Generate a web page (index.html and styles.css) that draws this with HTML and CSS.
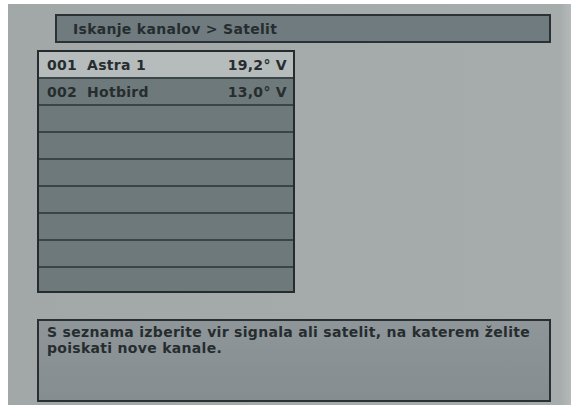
FILE: index.html
```html
<!DOCTYPE html>
<html lang="sl">
<head>
<meta charset="utf-8">
<title>Iskanje kanalov</title>
<link rel="stylesheet" href="styles.css">
</head>
<body>
<div class="screen">
  <div class="title">Iskanje kanalov &gt; Satelit</div>
  <div class="list">
    <div class="row selected"><span class="num">001</span><span class="name">Astra 1</span><span class="pos">19,2° V</span></div>
    <div class="row"><span class="num">002</span><span class="name">Hotbird</span><span class="pos">13,0° V</span></div>
    <div class="row"></div>
    <div class="row"></div>
    <div class="row"></div>
    <div class="row"></div>
    <div class="row"></div>
    <div class="row"></div>
    <div class="row last"></div>
  </div>
  <div class="info">S seznama izberite vir signala ali satelit, na katerem želite poiskati nove kanale.</div>
</div>
</body>
</html>
```

FILE: styles.css
```css
html, body {
  margin: 0;
  padding: 0;
  background: #ffffff;
}
body {
  font-family: "DejaVu Sans", Verdana, sans-serif;
  font-size: 14px;
  font-weight: bold;
  letter-spacing: 0.3px;
  color: #262d2f;
}
.screen {
  margin: 4px 0 0 8px;
  height: 401px;
  box-sizing: border-box;
  padding-top: 10px;
  background: linear-gradient(90deg, #a2a7a8 0%, #a5aaab 60%, #a6abac 98%, #b4b9ba 100%);
  display: flex;
  flex-direction: column;
  align-items: flex-start;
}
.title {
  margin-left: 47px;
  width: 496px;
  height: 29px;
  box-sizing: border-box;
  border: 2px solid #2b3134;
  background: #6f7b7f;
  padding-left: 16px;
  line-height: 26px;
}
.list {
  margin-left: 29px;
  margin-top: 7px;
  width: 258px;
  box-sizing: border-box;
  border: 2px solid #262c2e;
  background: #6d787a;
  display: flex;
  flex-direction: column;
}
.row {
  height: 25px;
  border-bottom: 2px solid #3b4446;
  display: flex;
  align-items: center;
  padding: 0 6px 0 8px;
  background: #6e797b;
}
.row.last {
  height: 23px;
  border-bottom: none;
}
.row.selected {
  background: #b6bbbc;
}
.num {
  width: 40px;
}
.name {
  flex: 1;
}
.pos {
  text-align: right;
}
.info {
  margin-left: 29px;
  margin-top: 26px;
  width: 514px;
  height: 83px;
  box-sizing: border-box;
  border: 2px solid #2a3032;
  background: linear-gradient(180deg, #8f9699 0%, #868d90 100%);
  padding: 3px 6px 3px 8px;
  line-height: 16px;
}
```
